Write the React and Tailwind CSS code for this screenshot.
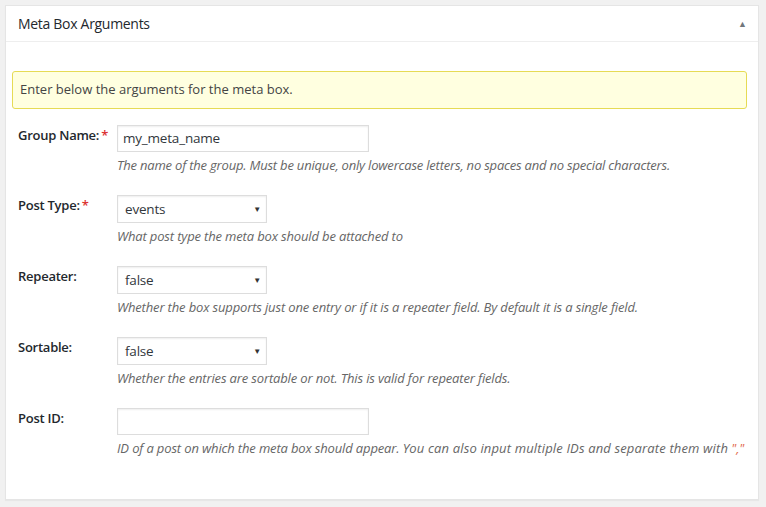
import React from "react";

function Label({ text, required }) {
  return (
    <div className="w-[99px] shrink-0 pt-[1px] font-semibold text-[13px] tracking-[-0.25px] text-[#23282d] leading-[18px]">
      {text}
      {required && <span className="text-[#dc3232] ml-[2px]">*</span>}
    </div>
  );
}

function Select({ value }) {
  return (
    <div className="w-[150px] h-[28px] border border-[#dddddd] bg-white flex items-center justify-between pl-[7px] pr-[5px] text-[13.5px] tracking-[-0.2px] text-[#32373c] shadow-[inset_0_1px_2px_rgba(0,0,0,0.07)]">
      <span>{value}</span>
      <span className="text-[8px] text-[#333]">▼</span>
    </div>
  );
}

function Field({ label, required, children, desc }) {
  return (
    <div className="flex px-[12px]">
      <Label text={label} required={required} />
      <div className="flex flex-col">
        {children}
        <p className="mt-[4px] text-[13px] italic text-[#666] leading-[18px] tracking-[-0.15px] whitespace-nowrap">{desc}</p>
      </div>
    </div>
  );
}

export default function App() {
  return (
    <div className="min-h-[507px] bg-[#f1f1f1] p-[5px] pr-[7px] font-['Open_Sans',sans-serif]">
      <div className="bg-white border border-[#e5e5e5] shadow-[0_1px_1px_rgba(0,0,0,0.04)] h-[495px]">
        <div className="h-[36px] border-b border-[#eeeeee] flex items-center justify-between px-[12px]">
          <h2 className="text-[14px] font-normal tracking-[-0.3px] text-[#23282d]">Meta Box Arguments</h2>
          <span className="text-[9px] text-[#72777c] mr-[-1px]">▲</span>
        </div>
        <div className="pl-[6px] pr-[11px] pt-[29px]">
          <div className="h-[38px] bg-[#ffffe0] border border-[#e6db55] rounded-[3px] flex items-center px-[7px] text-[13px] text-[#444]">
            Enter below the arguments for the meta box.
          </div>
        </div>
        <div className="flex flex-col gap-[21px] pt-[16px]">
          <Field
            label="Group Name:"
            required
            desc={<span className="tracking-[-0.2px]">The name of the group. Must be unique, only lowercase letters, no spaces and no special characters.</span>}
          >
            <div className="w-[252px] h-[27px] border border-[#dddddd] flex items-center px-[5px] text-[13.5px] tracking-[-0.2px] text-[#32373c] shadow-[inset_0_1px_2px_rgba(0,0,0,0.07)]">
              my_meta_name
            </div>
          </Field>
          <Field label="Post Type:" required desc="What post type the meta box should be attached to">
            <Select value="events" />
          </Field>
          <Field
            label="Repeater:"
            desc="Whether the box supports just one entry or if it is a repeater field. By default it is a single field."
          >
            <Select value="false" />
          </Field>
          <Field label="Sortable:" desc="Whether the entries are sortable or not. This is valid for repeater fields.">
            <Select value="false" />
          </Field>
          <Field
            label="Post ID:"
            desc={
              <>
                ID of a post on which the meta box should appear.{" "}
                <span className="tracking-[0.15px]">You can also input multiple IDs and separate them with</span>{" "}
                <span className="text-[#e2694c]">","</span>
              </>
            }
          >
            <div className="w-[252px] h-[27px] border border-[#dddddd] shadow-[inset_0_1px_2px_rgba(0,0,0,0.07)]" />
          </Field>
        </div>
      </div>
    </div>
  );
}
